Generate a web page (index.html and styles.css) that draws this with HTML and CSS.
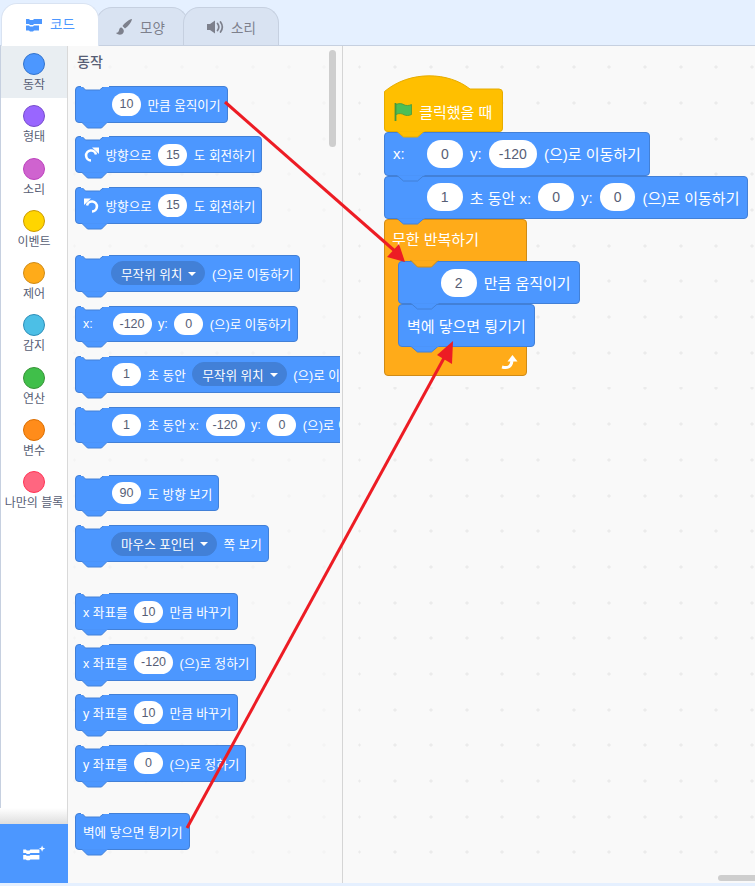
FILE: index.html
```html
<!DOCTYPE html>
<html lang="ko">
<head>
  <meta charset="UTF-8" />
  <title>코드 - 블록 에디터</title>
  <meta name="viewport" content="width=device-width, initial-scale=1.0"/>
  <link rel="stylesheet" href="styles.css">
</head>
<body>
<div class="editor">
  <nav class="tabs">
    <div class="tab active">
      <svg class="tab-icon" width="18" height="14" viewBox="0 0 18 14"><path d="M1 1h3l1 1h3l1-1h8v5h-8l-1 1H5L4 6H1zM1 7.500h3l1 1h3l1-1h5v5H9l-1 1H5l-1-1H1z" fill="#4c97ff"/></svg>
      코드
    </div>
    <div class="tab costume">
      <svg class="tab-icon" width="18" height="18" viewBox="0 0 18 18"><path d="M17 1c-3 .5-7 3.500-9.500 7l2.500 2.500C13.500 8 16.500 4 17 1zM6.500 9.500C4 9.500 4.500 12 3.500 13.500 3 14.500 2 14.800 1 15c2 2 6 2.500 7.500-.5.800-1.700.3-3.300-2-5z" fill="#7d808c"/></svg>
      모양
    </div>
    <div class="tab">
      <svg class="tab-icon" width="18" height="14" viewBox="0 0 18 14"><path d="M1 4h3l5-3.500v13L4 10H1z" fill="#7d808c"/><path d="M11.500 3.500c1.500 2 1.500 5 0 7M14.500 2c2.200 3 2.200 7 0 10" fill="none" stroke="#7d808c" stroke-width="1.700" stroke-linecap="round"/></svg>
      소리
    </div>
  </nav>

  <div class="workarea">
    <aside class="categories">
      <div class="category selected"><span class="dot motion"></span>동작</div>
      <div class="category"><span class="dot looks"></span>형태</div>
      <div class="category"><span class="dot sound"></span>소리</div>
      <div class="category"><span class="dot events"></span>이벤트</div>
      <div class="category"><span class="dot control"></span>제어</div>
      <div class="category"><span class="dot sensing"></span>감지</div>
      <div class="category"><span class="dot operators"></span>연산</div>
      <div class="category"><span class="dot variables"></span>변수</div>
      <div class="category"><span class="dot myblocks"></span>나만의 블록</div>
      <div class="extension">
        <svg width="24" height="18" viewBox="0 0 26 20"><path d="M1 5h3l1 1h3l1-1h10v4H9l-1 1H5L4 9H1zM1 11h3l1 1h3l1-1h10v5H9l-1 1H5l-1-1H1z" fill="#fff"/><path d="M22 0.500l1 2.500 2.500 1-2.500 1-1 2.500-1-2.500-2.500-1 2.500-1z" fill="#fff"/></svg>
      </div>
    </aside>

    <section class="palette">
      <h3 class="palette-title">동작</h3>

      <div class="block indent"><span class="num">10</span>만큼 움직이기</div>
      <div class="block">
        <svg class="turn" width="17" height="17" viewBox="0 0 17 17"><path d="M13 8.500a5 5 0 1 0-5 6" fill="none" stroke="#fff" stroke-width="2.600"/><path d="M9 1.500h7v6.500z" fill="#fff"/></svg>
        방향으로<span class="num">15</span>도 회전하기
      </div>
      <div class="block">
        <svg class="turn" width="17" height="17" viewBox="0 0 17 17"><path d="M4 8.500a5 5 0 1 1 5 6" fill="none" stroke="#fff" stroke-width="2.600"/><path d="M8 1.500H1v6.500z" fill="#fff"/></svg>
        방향으로<span class="num">15</span>도 회전하기
      </div>

      <div class="block indent group"><span class="menu">무작위 위치<i class="caret"></i></span>(으)로 이동하기</div>
      <div class="block"><span class="axis">x:</span><span class="num wide">-120</span>y:<span class="num">0</span>(으)로 이동하기</div>
      <div class="block indent"><span class="num">1</span>초 동안<span class="menu">무작위 위치<i class="caret"></i></span>(으)로 이동하기</div>
      <div class="block indent"><span class="num">1</span>초 동안 x:<span class="num wide">-120</span>y:<span class="num">0</span>(으)로 이동하기</div>

      <div class="block indent group"><span class="num">90</span>도 방향 보기</div>
      <div class="block indent"><span class="menu">마우스 포인터<i class="caret"></i></span>쪽 보기</div>

      <div class="block group">x 좌표를<span class="num">10</span>만큼 바꾸기</div>
      <div class="block">x 좌표를<span class="num wide">-120</span>(으)로 정하기</div>
      <div class="block">y 좌표를<span class="num">10</span>만큼 바꾸기</div>
      <div class="block">y 좌표를<span class="num">0</span>(으)로 정하기</div>

      <div class="block group">벽에 닿으면 튕기기</div>

      <div class="palette-scroll"></div>
    </section>

    <section class="canvas">
      <div class="stack">
        <svg class="hat-cap" width="119" height="18" viewBox="0 0 119 18"><path d="M0.500 18V16.500C26-5 65-3 86 14H115a3.500 3.500 0 0 1 3.500 3.500V18z" fill="#ffbf00" stroke="#e6ac00"/></svg>
        <div class="block big hat">
          <svg class="flag" width="20" height="20" viewBox="0 0 20 20"><path d="M2.500 1v18" stroke="#45993d" stroke-width="1.800"/><path d="M3 2.500c3-1.500 6-1 8 .3 2 1 5 1 7.500-.3v10c-2.500 1.300-5.500 1.300-7.500.3-2-1.300-5-1.800-8-.3z" fill="#4cbf56" stroke="#45993d" stroke-width=".8"/></svg>
          클릭했을 때
        </div>
        <div class="block big"><span class="axis">x:</span><span class="num">0</span>y:<span class="num wide">-120</span>(으)로 이동하기</div>
        <div class="block big indent"><span class="num">1</span>초 동안 x:<span class="num">0</span>y:<span class="num">0</span>(으)로 이동하기</div>
        <div class="loop">
          <div class="loop-label">무한 반복하기</div>
          <div class="block big indent"><span class="num">2</span>만큼 움직이기</div>
          <div class="block big">벽에 닿으면 튕기기</div>
          <svg class="loop-arrow" width="18" height="16" viewBox="0 0 18 16"><path d="M1 13c5 1.500 9 .5 10-6" fill="none" stroke="#fff" stroke-width="3"/><path d="M6.500 7.500L11.500 1l5 6.500z" fill="#fff"/></svg>
        </div>
      </div>
      <div class="canvas-scroll"></div>
    </section>
  </div>

  <svg class="arrows" width="755" height="886" viewBox="0 0 755 886">
    <path d="M225 102L396 252" stroke="#ed1c24" stroke-width="3" fill="none"/>
    <path d="M405 262L387 257 399 244z" fill="#ed1c24"/>
    <path d="M187 828L444 358" stroke="#ed1c24" stroke-width="3" fill="none"/>
    <path d="M453 341L452 364 437 355z" fill="#ed1c24"/>
  </svg>
</div>
</body>
</html>
```

FILE: styles.css
```css
* {
  box-sizing: border-box;
}

body {
  margin: 0;
  font-family: "Liberation Sans", "Noto Sans CJK KR", sans-serif;
  color: #575e75;
}

.editor {
  position: relative;
  display: flex;
  flex-direction: column;
  height: 886px;
  overflow: hidden;
  background: #e5f0ff;
  padding-bottom: 3px;
}

/* tabs */
.tabs {
  display: flex;
  align-items: flex-end;
  height: 46px;
  padding-left: 1px;
  border-bottom: 1px solid #c6d0e0;
}

.tab {
  display: flex;
  align-items: center;
  justify-content: center;
  gap: 7px;
  width: 92px;
  height: 38px;
  margin-right: -5px;
  border: 1px solid #c6d0e0;
  border-bottom: 0;
  border-radius: 16px 16px 0 0;
  background: #d9e3f2;
  font-size: 13.500px;
  color: #7d808c;
}

.tab:last-child {
  width: 96px;
}

.tab.costume {
  padding-right: 4px;
}

.tab.active {
  position: relative;
  z-index: 1;
  width: 98px;
  height: 43px;
  margin-right: -3px;
  margin-bottom: -1px;
  border-color: #d9e3f2;
  background: #fff;
  color: #4c97ff;
  padding-bottom: 4px;
}

.tab.active .tab-icon {
  margin-top: 4px;
}

.workarea {
  flex: 1;
  display: flex;
  min-height: 0;
  background: #f9f9f9;
}

/* category column */
.categories {
  position: relative;
  width: 68px;
  flex-shrink: 0;
  background: #fff;
  border-left: 1px solid #c6d0e0;
  border-right: 1px solid #d9d9d9;
}

.category {
  display: flex;
  flex-direction: column;
  align-items: center;
  height: 52.250px;
  padding-top: 7px;
  font-size: 12px;
  line-height: 16px;
  white-space: nowrap;
}

.category.selected {
  background: #e9eef2;
}

.dot {
  width: 22px;
  height: 22px;
  margin-bottom: 2px;
  border-radius: 50%;
  border: 1px solid;
}

.motion { background: #4c97ff; border-color: #3373cc; }
.looks { background: #9966ff; border-color: #774dcb; }
.sound { background: #cf63cf; border-color: #bd42bd; }
.events { background: #ffd500; border-color: #cc9900; }
.control { background: #ffab19; border-color: #cf8b17; }
.sensing { background: #4cbfe6; border-color: #2e8eb8; }
.operators { background: #40bf4a; border-color: #389438; }
.variables { background: #ff8c1a; border-color: #db6e00; }
.myblocks { background: #ff6680; border-color: #ff3355; }

.extension {
  position: absolute;
  left: -1px;
  right: -1px;
  bottom: 0;
  height: 59px;
  display: flex;
  align-items: center;
  justify-content: center;
  background: #4c97ff;
}

.extension::before {
  content: "";
  position: absolute;
  left: 0;
  right: 1px;
  top: -16px;
  height: 16px;
  background: linear-gradient(#fff, #dedede);
}

/* palette */
.palette {
  position: relative;
  display: flex;
  flex-direction: column;
  align-items: flex-start;
  width: 272px;
  flex-shrink: 0;
  padding-left: 7px;
  overflow: hidden;
  background-image: url("data:image/svg+xml,%3Csvg xmlns='http://www.w3.org/2000/svg' width='35.700' height='35.700'%3E%3Cpath d='M17.850 16v3.700M16 17.850h3.700' stroke='%23f2f2f2'/%3E%3C/svg%3E");
  background-size: 35.700px 35.700px;
  background-position: 24.350px 39.150px;
}

.palette-title {
  margin: 0;
  height: 40px;
  padding: 7px 0 0 2px;
  font-size: 14px;
  line-height: 18px;
  font-weight: 500;
  color: #575e75;
}

.palette-scroll {
  position: absolute;
  left: 261px;
  top: 4px;
  width: 7px;
  height: 97px;
  border-radius: 4px;
  background: #cecece;
}

/* blocks */
.block {
  position: relative;
  display: flex;
  flex-shrink: 0;
  align-items: center;
  gap: 6.500px;
  width: max-content;
  height: 36.700px;
  margin-bottom: 13.800px;
  padding: 0 6px 0 7px;
  border: 1px solid #4280d7;
  border-radius: 4px;
  background: #4c97ff;
  color: #fff;
  font-size: 12.600px;
  white-space: nowrap;
}

.block.indent {
  padding-left: 36px;
}

.block.group {
  margin-top: 17.700px;
}

/* notch on top, tab on the bottom */
.block::before {
  content: "";
  position: absolute;
  left: 5px;
  top: -1px;
  width: 28px;
  height: 5px;
  background: url("data:image/svg+xml,%3Csvg xmlns='http://www.w3.org/2000/svg' width='28' height='5'%3E%3Cpath d='M0.500 0l4 4h14l5-4z' fill='%23f9f9f9' stroke='%234280d7'/%3E%3Cpath d='M0 0h28' stroke='%23f9f9f9' stroke-width='2'/%3E%3C/svg%3E") no-repeat;
}

.block::after {
  content: "";
  position: absolute;
  z-index: 2;
  left: 5px;
  bottom: -7px;
  width: 28px;
  height: 7px;
  background: url("data:image/svg+xml,%3Csvg xmlns='http://www.w3.org/2000/svg' width='28' height='7'%3E%3Cpath d='M0.500 0l6 6h14l6-6z' fill='%234c97ff' stroke='%234280d7'/%3E%3Cpath d='M1.500 0h25' stroke='%234c97ff' stroke-width='1.500'/%3E%3C/svg%3E") no-repeat;
}

.num {
  display: flex;
  align-items: center;
  justify-content: center;
  width: 29px;
  height: 22.500px;
  border-radius: 12px;
  background: #fff;
  color: #575e75;
  font-size: 12.500px;
}

.num.wide {
  width: 39px;
}

.axis {
  width: 23px;
}

.turn {
  margin-right: -1px;
}

.menu {
  display: flex;
  align-items: center;
  gap: 6px;
  height: 24px;
  margin-left: -1px;
  padding: 0 8px 0 9px;
  border: 1px solid #4280d7;
  border-radius: 12px;
  background: #4280d7;
}

.block > .num + .menu {
  margin-left: 0;
}

.caret {
  width: 0;
  height: 0;
  margin-top: 1px;
  border: 4px solid transparent;
  border-top: 4.500px solid #fff;
  border-bottom: 0;
}

/* canvas */
.canvas {
  position: relative;
  flex: 1;
  min-width: 0;
  margin-left: 2px;
  overflow: hidden;
  border-left: 1px solid #d5d5d5;
  background-image: url("data:image/svg+xml,%3Csvg xmlns='http://www.w3.org/2000/svg' width='35.700' height='35.700'%3E%3Cpath d='M17.850 16v3.700M16 17.850h3.700' stroke='%23e6e6e6'/%3E%3C/svg%3E");
  background-size: 35.700px 35.700px;
  background-position: 34.350px 39.150px;
}

.stack {
  position: absolute;
  left: 41px;
  top: 29px;
  width: max-content;
}

.hat-cap {
  display: block;
  margin-bottom: -1px;
}

.block.big {
  height: 43.300px;
  margin-bottom: 0;
  gap: 7.200px;
  padding: 0 8px;
  font-size: 15px;
}

.block.big.indent {
  padding-left: 42px;
}

.block.big .num {
  width: 35.500px;
  height: 28px;
  border-radius: 14px;
  font-size: 14px;
}

.block.big .num.wide {
  width: 48px;
}

.block.big .axis {
  width: 27px;
}

.block.big::before {
  display: none;
}

.block.big::after {
  left: 11px;
  width: 30px;
  background: url("data:image/svg+xml,%3Csvg xmlns='http://www.w3.org/2000/svg' width='30' height='7'%3E%3Cpath d='M0.500 0l7 6h14l7-6z' fill='%234c97ff' stroke='%234280d7'/%3E%3Cpath d='M1.500 0h27' stroke='%234c97ff' stroke-width='1.500'/%3E%3C/svg%3E") no-repeat;
}

.block.hat {
  width: 119px;
  height: 40.300px;
  border-radius: 0 0 4px 4px;
  border-color: #e6ac00;
  border-top: 0;
  background: #ffbf00;
}

.block.hat::after {
  background: url("data:image/svg+xml,%3Csvg xmlns='http://www.w3.org/2000/svg' width='30' height='7'%3E%3Cpath d='M0.500 0l7 6h14l7-6z' fill='%23ffbf00' stroke='%23e6ac00'/%3E%3Cpath d='M1.500 0h27' stroke='%23ffbf00' stroke-width='1.500'/%3E%3C/svg%3E") no-repeat;
}

.flag {
  margin-right: -1px;
}

/* forever loop */
.loop {
  position: relative;
  width: 143px;
  padding: 41px 0 27.500px 14px;
  border: 1px solid #cf8b17;
  border-radius: 4px;
  background: #ffab19;
}

.loop .block.big {
  left: -1px;
}

.loop::after {
  content: "";
  position: absolute;
  z-index: 2;
  left: 25px;
  top: 40px;
  width: 30px;
  height: 8px;
  background: url("data:image/svg+xml,%3Csvg xmlns='http://www.w3.org/2000/svg' width='30' height='8'%3E%3Cpath d='M0.500 0l7 7h14l7-7z' fill='%23ffab19' stroke='%23cf8b17'/%3E%3Cpath d='M1.500 0h27' stroke='%23ffab19' stroke-width='1.500'/%3E%3C/svg%3E") no-repeat;
}

.loop-label {
  position: absolute;
  left: 7px;
  top: 9px;
  color: #fff;
  font-size: 15px;
  line-height: 22px;
  white-space: nowrap;
}

.loop-arrow {
  position: absolute;
  right: 7px;
  bottom: 5px;
}

.canvas-scroll {
  position: absolute;
  right: -6px;
  bottom: 2px;
  width: 43px;
  height: 6px;
  border-radius: 3px;
  background: #cecece;
}

.arrows {
  position: absolute;
  left: 0;
  top: 0;
  z-index: 5;
  pointer-events: none;
}
```
